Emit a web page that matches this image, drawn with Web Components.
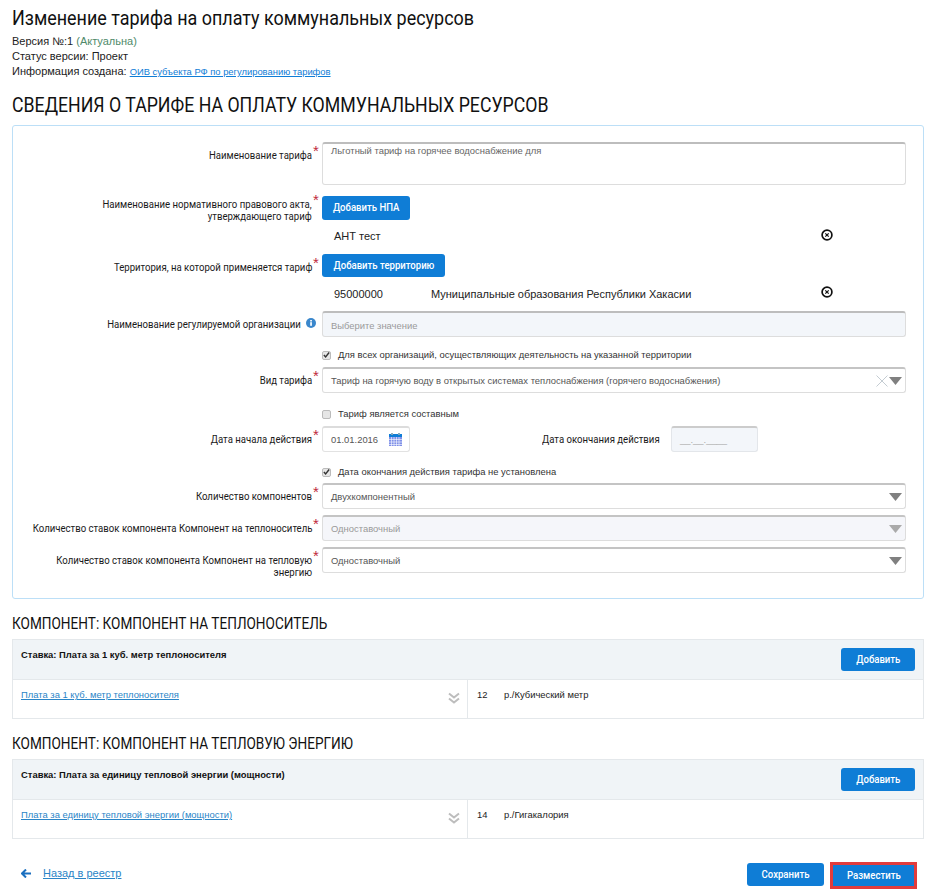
<!DOCTYPE html>
<html lang="ru">
<head>
<meta charset="utf-8">
<title>Изменение тарифа</title>
<style>
  html, body { margin: 0; background: #fff; }
  body { font-family: "Liberation Sans", Arial, sans-serif; color: #111; }
</style>
</head>
<body>

<tariff-page>
  <page-info>
    <span slot="title">Изменение тарифа на оплату коммунальных ресурсов</span>
    <div>Версия №:1 <span style="color:#4f8a6b">(Актуальна)</span></div>
    <div>Статус версии: Проект</div>
    <div>Информация создана: <a href="#" style="color:#0f7dd6;font-size:9.4px">ОИВ субъекта РФ по регулированию тарифов</a></div>
  </page-info>

  <section-title style="margin-top:14px">Сведения о тарифе на оплату коммунальных ресурсов</section-title>

  <form-card style="margin-top:8px">
    <form-row label="Наименование тарифа" required>
      <text-box multi value="Льготный тариф на горячее водоснабжение для"></text-box>
    </form-row>
    <form-row style="margin-top:11px;--label-top:3px" label="Наименование нормативного правового акта,|утверждающего тариф" required>
      <blue-button style="--btn-w:88px">Добавить НПА</blue-button>
    </form-row>
    <form-row style="margin-top:3px">
      <picked-item first="АНТ тест"></picked-item>
    </form-row>
    <form-row style="margin-top:8px" label="Территория, на которой применяется тариф" required>
      <blue-button style="--btn-w:123px;--btn-h:23px">Добавить территорию</blue-button>
    </form-row>
    <form-row style="margin-top:7px">
      <picked-item style="--x-top:2px" first="95000000" second="Муниципальные образования Республики Хакасии"></picked-item>
    </form-row>
    <form-row style="margin-top:7px" label="Наименование регулируемой организации" info>
      <text-box disabled placeholder value="Выберите значение"></text-box>
    </form-row>
    <form-row style="margin-top:9px">
      <check-line checked>Для всех организаций, осуществляющих деятельность на указанной территории</check-line>
    </form-row>
    <form-row style="margin-top:3px" label="Вид тарифа" required>
      <select-box clear value="Тариф на горячую воду в открытых системах теплоснабжения (горячего водоснабжения)"></select-box>
    </form-row>
    <form-row style="margin-top:12px">
      <check-line>Тариф является составным</check-line>
    </form-row>
    <form-row style="margin-top:3px" label="Дата начала действия" required>
      <date-range start="01.01.2016" end-label="Дата окончания действия" end="__.__.____"></date-range>
    </form-row>
    <form-row style="margin-top:11px">
      <check-line checked>Дата окончания действия тарифа не установлена</check-line>
    </form-row>
    <form-row style="margin-top:2px" label="Количество компонентов" required>
      <select-box value="Двухкомпонентный"></select-box>
    </form-row>
    <form-row style="margin-top:6px" label="Количество ставок компонента Компонент на теплоноситель" required>
      <select-box disabled value="Одноставочный"></select-box>
    </form-row>
    <form-row style="margin-top:6px" label="Количество ставок компонента Компонент на тепловую|энергию" required>
      <select-box value="Одноставочный"></select-box>
    </form-row>
  </form-card>

  <component-block style="margin-top:14px" heading="Компонент: Компонент на теплоноситель"
    rate="Ставка: Плата за 1 куб. метр теплоносителя"
    link="Плата за 1 куб. метр теплоносителя" amount="12" unit="р./Кубический метр"></component-block>

  <component-block style="margin-top:14px" heading="Компонент: Компонент на тепловую энергию"
    rate="Ставка: Плата за единицу тепловой энергии (мощности)"
    link="Плата за единицу тепловой энергии (мощности)" amount="14" unit="р./Гигакалория"></component-block>

  <page-footer></page-footer>
</tariff-page>

<script>
const ROBOTO = `Roboto, "Liberation Sans", sans-serif`;
const ARIAL = `"Liberation Sans", Arial, sans-serif`;

function esc(s) {
  return (s || "").replace(/&/g, "&amp;").replace(/"/g, "&quot;").replace(/</g, "&lt;");
}

class TariffPage extends HTMLElement {
  constructor() {
    super();
    this.attachShadow({ mode: "open" });
    this.shadowRoot.innerHTML = `
      <style>
        :host { display: block; width: 931px; height: 895px; box-sizing: border-box; padding: 6px 7px 0 12px; overflow: hidden; }
      </style>
      <slot></slot>`;
  }
}

class PageInfo extends HTMLElement {
  constructor() {
    super();
    this.attachShadow({ mode: "open" });
    this.shadowRoot.innerHTML = `
      <style>
        :host { display: block; font: 11px/15px ${ARIAL}; color: #222; }
        h1 { margin: 0 0 4px; font: 400 20px/24px ${ROBOTO}; color: #111; white-space: nowrap; }
        h1 span { display: inline-block; transform: scaleX(.897); transform-origin: 0 50%; }
      </style>
      <h1><span><slot name="title"></slot></span></h1>
      <slot></slot>`;
  }
}

class SectionTitle extends HTMLElement {
  constructor() {
    super();
    this.attachShadow({ mode: "open" });
    this.shadowRoot.innerHTML = `
      <style>
        :host { display: block; font: 400 20px/24px ${ROBOTO}; color: #111; text-transform: uppercase; white-space: nowrap; }
        span { display: inline-block; transform: scaleX(.886); transform-origin: 0 50%; }
      </style>
      <span><slot></slot></span>`;
  }
}

class FormCard extends HTMLElement {
  constructor() {
    super();
    this.attachShadow({ mode: "open" });
    this.shadowRoot.innerHTML = `
      <style>
        :host { display: block; width: 912px; height: 474px; box-sizing: border-box; padding: 16px 17px 0 0;
                border: 1px solid #bcdff7; border-radius: 3px; }
      </style>
      <slot></slot>`;
  }
}

class FormRow extends HTMLElement {
  connectedCallback() {
    if (this.shadowRoot) return;
    this.attachShadow({ mode: "open" });
    const label = esc(this.getAttribute("label")).split("|").join("<br>");
    const star = this.hasAttribute("required") ? "<i>*</i>" : "";
    const info = this.hasAttribute("info")
      ? `<svg viewBox="0 0 10 10" width="10" height="10"><circle cx="5" cy="5" r="5" fill="#3a87cc"/><rect x="4.2" y="4.2" width="1.7" height="3.6" fill="#fff"/><rect x="4.2" y="2" width="1.7" height="1.5" fill="#fff"/></svg>`
      : "";
    this.shadowRoot.innerHTML = `
      <style>
        :host { display: grid; grid-template-columns: 299px 10px 1fr; align-items: start; }
        .label { display: flex; justify-content: flex-end; min-height: 1px; padding-top: var(--label-top, 8px);
                 font: 400 11px/12px ${ROBOTO}; color: #1a1a1a; }
        .label span { flex: none; text-align: right; white-space: nowrap; transform: scaleX(.873); transform-origin: 100% 50%; }
        .mark { position: relative; }
        i { position: absolute; left: 1px; top: calc(var(--label-top, 8px) - 7px); font: 400 15px/15px ${ARIAL}; color: #c0293b; }
        svg { position: absolute; left: -6px; top: 7px; }
        .label.with-info { padding-right: 11px; }
      </style>
      <div class="label${info ? " with-info" : ""}"><span>${label}</span></div>
      <div class="mark">${star}${info}</div>
      <div><slot></slot></div>`;
  }
}

class TextBox extends HTMLElement {
  connectedCallback() {
    if (this.shadowRoot) return;
    this.attachShadow({ mode: "open" });
    const multi = this.hasAttribute("multi");
    const disabled = this.hasAttribute("disabled");
    this.shadowRoot.innerHTML = `
      <style>
        :host { display: block; }
        div { box-sizing: border-box; height: ${multi ? 43 : 26}px; padding: ${multi ? "1px" : "7px"} 8px 0;
              border: 1px solid #ddd; border-top: 2px solid #bdbdbd; border-radius: 3px;
              background: ${disabled ? "#f3f6fa" : "#fff"}; color: ${disabled ? "#9a9a9a" : "#666"};
              font: 9.42px/12px ${ARIAL}; }
      </style>
      <div>${esc(this.getAttribute("value"))}</div>`;
  }
}

class SelectBox extends HTMLElement {
  connectedCallback() {
    if (this.shadowRoot) return;
    this.attachShadow({ mode: "open" });
    const disabled = this.hasAttribute("disabled");
    const clear = this.hasAttribute("clear")
      ? `<svg class="x" viewBox="0 0 12 12" width="12" height="12"><path d="M.5.5l11 11M11.5.5l-11 11" stroke="#c4ccd2" stroke-width="1" fill="none"/></svg>`
      : "";
    this.shadowRoot.innerHTML = `
      <style>
        :host { display: block; }
        .box { box-sizing: border-box; height: 26px; padding: 1px 3px 0 8px; display: flex; align-items: center;
               border: 1px solid #ddd; border-top: 2px solid #c4c4c4; border-radius: 3px;
               background: ${disabled ? "#f5f6fa" : "#fff"}; color: ${disabled ? "#999" : "#555"};
               font: 9.42px/12px ${ARIAL}; }
        span { flex: 1; }
        .x { margin-right: 1px; }
      </style>
      <div class="box"><span>${esc(this.getAttribute("value"))}</span>${clear}
        <svg viewBox="0 0 13 8" width="13" height="8"><path d="M0 0h13L6.5 8z" fill="${disabled ? "#aaa" : "#808080"}"/></svg></div>`;
  }
}

class BlueButton extends HTMLElement {
  constructor() {
    super();
    this.attachShadow({ mode: "open" });
    this.shadowRoot.innerHTML = `
      <style>
        :host { display: inline-flex; box-sizing: border-box; width: var(--btn-w, 74px); height: var(--btn-h, 24px);
                align-items: center; justify-content: center; background: #0f7dd6; color: #fff; border-radius: var(--btn-r, 3px);
                font: 500 11px/12px ${ROBOTO}; white-space: nowrap; }
        span { display: inline-block; transform: scaleX(.87); }
      </style>
      <span><slot></slot></span>`;
  }
}

class PickedItem extends HTMLElement {
  connectedCallback() {
    if (this.shadowRoot) return;
    this.attachShadow({ mode: "open" });
    const second = this.getAttribute("second");
    this.shadowRoot.innerHTML = `
      <style>
        :host { display: flex; align-items: center; height: 20px; padding-left: 12px; font: 11px/14px ${ARIAL}; color: #222; position: relative; }
        .a { width: 97px; }
        svg { position: absolute; left: 499px; top: var(--x-top, 3px); }
      </style>
      <span class="a">${esc(this.getAttribute("first"))}</span>
      ${second ? `<span>${esc(second)}</span>` : ""}
      <svg viewBox="0 0 12 12" width="12" height="12"><circle cx="6" cy="6" r="4.9" fill="none" stroke="#111" stroke-width="1.7"/><path d="M4.3 4.3l3.4 3.4M7.7 4.3L4.3 7.7" stroke="#111" stroke-width="1.2"/></svg>`;
  }
}

class CheckLine extends HTMLElement {
  connectedCallback() {
    if (this.shadowRoot) return;
    this.attachShadow({ mode: "open" });
    const mark = this.hasAttribute("checked")
      ? `<svg viewBox="0 0 8 8" width="8" height="8"><path d="M1 4l2 2.3L7 1.2" fill="none" stroke="#333" stroke-width="1.6"/></svg>`
      : "";
    this.shadowRoot.innerHTML = `
      <style>
        :host { display: flex; align-items: center; height: 18px; font: 9.42px/12px ${ARIAL}; color: #333; }
        b { box-sizing: border-box; width: 9px; height: 9px; margin-right: 7px; border: 1px solid #bbb; border-radius: 2px;
            background: #e6e6e6; display: flex; align-items: center; justify-content: center; }
      </style>
      <b>${mark}</b><span><slot></slot></span>`;
  }
}

class DateRange extends HTMLElement {
  connectedCallback() {
    if (this.shadowRoot) return;
    this.attachShadow({ mode: "open" });
    this.shadowRoot.innerHTML = `
      <style>
        :host { display: flex; align-items: flex-start; }
        .box { box-sizing: border-box; height: 26px; display: flex; align-items: center; border-radius: 3px; font: 9.42px/12px ${ARIAL}; }
        .start { width: 88px; padding: 0 7px 0 8px; border: 1px solid #e2e2e2; border-top: 2px solid #dcdcdc; color: #555; justify-content: space-between; }
        .lbl { margin-left: 132px; width: 129px; padding-top: 8px; font: 400 11px/12px ${ROBOTO}; color: #1a1a1a; white-space: nowrap; }
        .lbl span { display: inline-block; transform: scaleX(.873); transform-origin: 0 50%; }
        .end { width: 87px; padding-left: 8px; border: 1px solid #e3e6ea; border-top: 2px solid #ccc; background: #f3f6fa; color: #aaa; }
      </style>
      <div class="box start"><span>${esc(this.getAttribute("start"))}</span>
        <svg viewBox="0 0 13 13" width="13" height="13"><rect x="0" y="1" width="13" height="12" fill="#7f90e8"/><rect x="0" y="1" width="13" height="3" fill="#0f7dd6"/><rect x="2" y="0" width="2" height="2" fill="#8ab"/><rect x="9" y="0" width="2" height="2" fill="#8ab"/><path d="M0 6.5h13M0 9h13M0 11.5h13M2.5 4v9M5 4v9M7.5 4v9M10 4v9" stroke="#fff" stroke-width=".6"/></svg></div>
      <div class="lbl"><span>${esc(this.getAttribute("end-label"))}</span></div>
      <div class="box end">${esc(this.getAttribute("end"))}</div>`;
  }
}

class ComponentBlock extends HTMLElement {
  connectedCallback() {
    if (this.shadowRoot) return;
    this.attachShadow({ mode: "open" });
    this.shadowRoot.innerHTML = `
      <style>
        :host { display: block; width: 912px; }
        h3 { margin: 0 0 6px; font: 400 17px/20px ${ROBOTO}; color: #111; text-transform: uppercase; white-space: nowrap; }
        h3 span { display: inline-block; transform: scaleX(.8); transform-origin: 0 50%; }
        .table { border: 1px solid #e4e8eb; }
        .head { height: 40px; box-sizing: border-box; background: #f0f4f7; border-bottom: 1px solid #e4e8eb;
                display: flex; justify-content: space-between; padding: 8px 8px 0 8px; }
        .rate { font: 700 9.42px/12px ${ARIAL}; color: #111; margin-top: 1px; }
        .row { display: flex; height: 38px; font: 9.42px/12px ${ARIAL}; }
        .left { width: 455px; box-sizing: border-box; padding: 9px 8px 0; position: relative; border-right: 1px solid #e4e8eb; }
        a { color: #2a85c7; }
        .left svg { position: absolute; right: 7px; top: 12px; }
        .right { flex: 1; padding: 9px 10px 0 9px; color: #222; display: flex; }
        .num { width: 27px; }
      </style>
      <h3><span>${esc(this.getAttribute("heading"))}</span></h3>
      <div class="table">
        <div class="head"><div class="rate">${esc(this.getAttribute("rate"))}</div>
          <blue-button style="--btn-h:23px">Добавить</blue-button></div>
        <div class="row">
          <div class="left"><a href="#">${esc(this.getAttribute("link"))}</a>
            <svg viewBox="0 0 12 12" width="12" height="12"><path d="M1 1.5l5 4 5-4M1 6.5l5 4 5-4" fill="none" stroke="#bdbdbd" stroke-width="2"/></svg></div>
          <div class="right"><span class="num">${esc(this.getAttribute("amount"))}</span><span>${esc(this.getAttribute("unit"))}</span></div>
        </div>
      </div>`;
  }
}

class PageFooter extends HTMLElement {
  constructor() {
    super();
    this.attachShadow({ mode: "open" });
    this.shadowRoot.innerHTML = `
      <style>
        :host { display: flex; align-items: flex-start; justify-content: space-between; width: 905px; margin-top: 23px; height: 27px; box-sizing: border-box; padding-left: 9px; }
        .back { display: flex; align-items: center; gap: 12px; font: 11px/14px ${ARIAL}; margin-top: 4px; }
        a { color: #2a85c7; }
        .acts { display: flex; align-items: flex-start; gap: 6px; }
        .acts > blue-button { margin-top: 1px; }
        .hl { box-sizing: border-box; border: 3px solid #e23c3c; display: flex; }
      </style>
      <div class="back">
        <svg viewBox="0 0 10 9" width="10" height="9"><path d="M5 .5L1 4.5l4 4M1.2 4.5H10" fill="none" stroke="#1a6fbf" stroke-width="2"/></svg>
        <a href="#">Назад в реестр</a>
      </div>
      <div class="acts">
        <blue-button style="--btn-w:77px;--btn-h:23px">Сохранить</blue-button>
        <div class="hl"><blue-button style="--btn-w:81px;--btn-h:21px;--btn-r:0">Разместить</blue-button></div>
      </div>`;
  }
}

customElements.define("tariff-page", TariffPage);
customElements.define("page-info", PageInfo);
customElements.define("section-title", SectionTitle);
customElements.define("form-card", FormCard);
customElements.define("form-row", FormRow);
customElements.define("text-box", TextBox);
customElements.define("select-box", SelectBox);
customElements.define("blue-button", BlueButton);
customElements.define("picked-item", PickedItem);
customElements.define("check-line", CheckLine);
customElements.define("date-range", DateRange);
customElements.define("component-block", ComponentBlock);
customElements.define("page-footer", PageFooter);
</script>
</body>
</html>
